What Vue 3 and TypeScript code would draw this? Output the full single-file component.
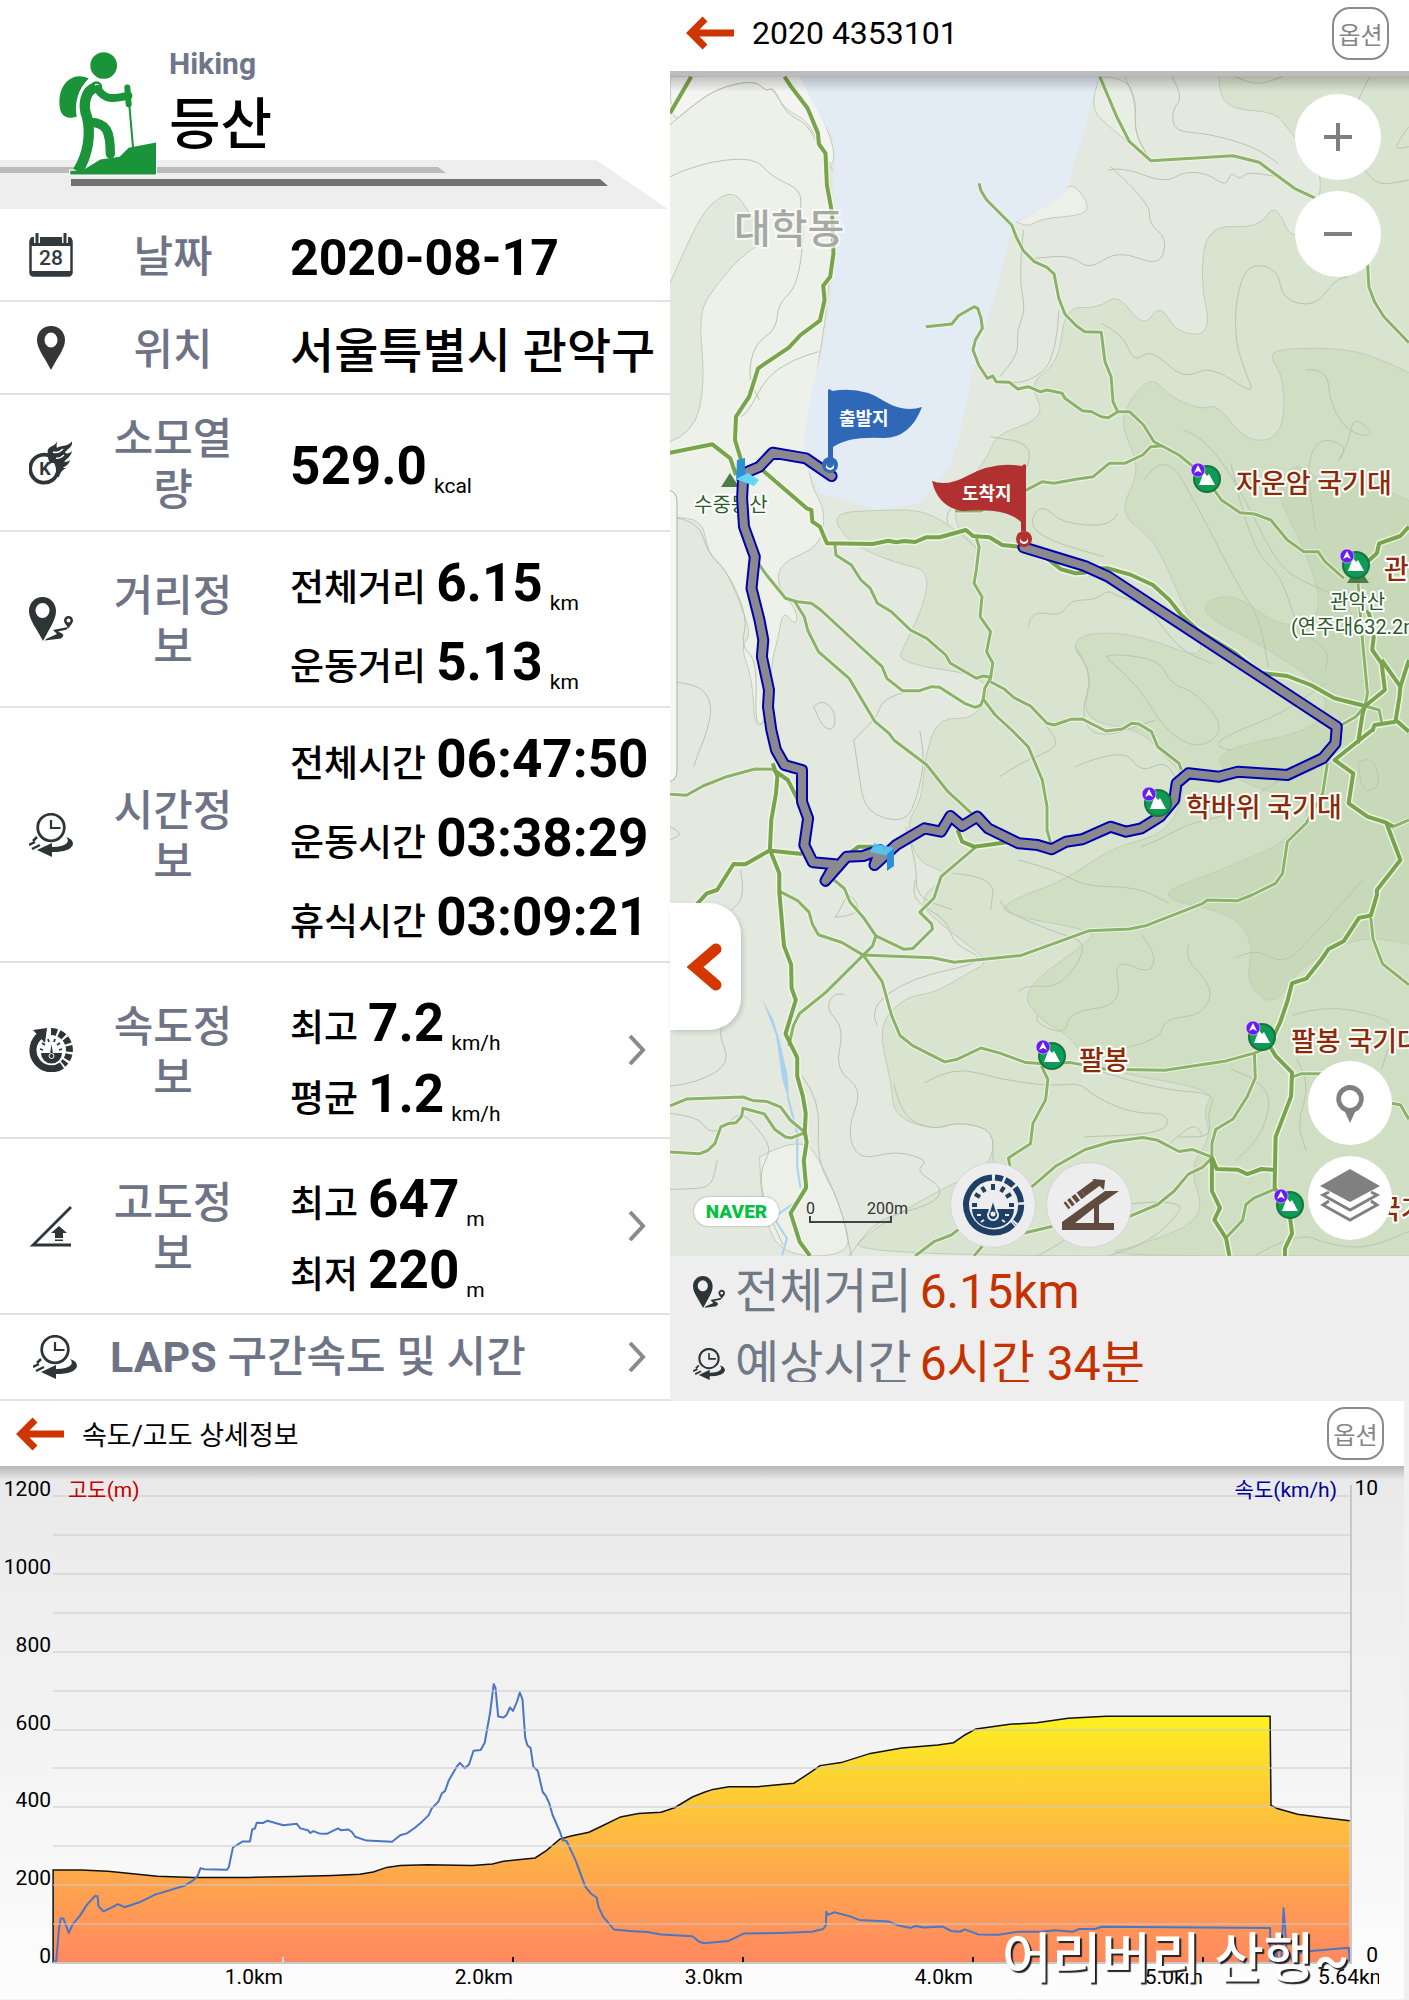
<script setup lang="ts">
interface Reading {
  name?: string
  value: string
  unit?: string
}
interface InfoRow {
  icon: string
  label: string
  readings: Reading[]
  kind: string
  more?: boolean
}
interface Peak {
  x: number
  y: number
  name: string
  tx: number
}

const rows: InfoRow[] = [
  { icon: 'calendar', label: '날짜', kind: 'date', readings: [{ value: '2020-08-17' }] },
  { icon: 'pin', label: '위치', kind: 'place', readings: [{ value: '서울특별시 관악구' }] },
  { icon: 'kcal', label: '소모열량', kind: 'single', readings: [{ value: '529.0', unit: 'kcal' }] },
  {
    icon: 'distance',
    label: '거리정보',
    kind: 'roomy',
    readings: [
      { name: '전체거리', value: '6.15', unit: 'km' },
      { name: '운동거리', value: '5.13', unit: 'km' },
    ],
  },
  {
    icon: 'time',
    label: '시간정보',
    kind: 'roomy',
    readings: [
      { name: '전체시간', value: '06:47:50' },
      { name: '운동시간', value: '03:38:29' },
      { name: '휴식시간', value: '03:09:21' },
    ],
  },
  {
    icon: 'speed',
    label: '속도정보',
    kind: 'tight',
    more: true,
    readings: [
      { name: '최고', value: '7.2', unit: 'km/h' },
      { name: '평균', value: '1.2', unit: 'km/h' },
    ],
  },
  {
    icon: 'slope',
    label: '고도정보',
    kind: 'tight',
    more: true,
    readings: [
      { name: '최고', value: '647', unit: 'm' },
      { name: '최저', value: '220', unit: 'm' },
    ],
  },
]

/* Survey sheets: left, top, horizontal and vertical units per drawn pixel. */
const sheets: Record<string, [number, number, number, number]> = {
  a: [0, 0, 2.122, 3],
  b: [0, 430, 2.122, 3],
  c: [0, 880, 2.122, 2.958],
  d: [0, 1400, 2.224, 2.613],
  e: [704, 1400, 2.224, 2.613],
}

type Point = [number, number]

function survey(trace: string): Point[] {
  let sheet = sheets.a
  const out: Point[] = []
  for (const token of trace.split(' ')) {
    if (sheets[token]) {
      sheet = sheets[token]
      continue
    }
    const [x, y] = token.split(',').map(Number)
    out.push([Math.round((sheet[0] + x / sheet[2]) * 10) / 10, Math.round((sheet[1] + y / sheet[3]) * 10) / 10])
  }
  return out
}

function line(trace: string): string {
  return 'M' + survey(trace).map((p) => p.join(' ')).join('L')
}

function smooth(trace: string): string {
  const p = survey(trace)
  let d = `M${p[0][0]} ${p[0][1]}`
  for (let i = 1; i < p.length - 1; i++) {
    d += `Q${p[i][0]} ${p[i][1]} ${(p[i][0] + p[i + 1][0]) / 2} ${(p[i][1] + p[i + 1][1]) / 2}`
  }
  const last = p[p.length - 1]
  return d + `L${last[0]} ${last[1]}`
}

const land: { fill: string; d: string }[] = [
  { fill: '#edf1e9', d: smooth('a 0,230 270,230 340,420 345,850 285,1330 b 300,170 330,240 320,350 230,400 230,480 270,540 268,590 240,540 230,620 215,700 210,850 180,905 175,750 150,650 170,620 160,560 120,420 80,370 70,270 0,260') },
  { fill: '#f4f5f2', d: smooth('a 0,230 0,375 40,325 100,265 180,240 205,275 215,260 245,330 290,360 320,440 345,510 350,430 280,230') },
  { fill: '#e1e9dc', d: smooth('a 0,1325 50,1300 75,1150 60,940 95,860 150,770 205,720 170,640 135,570 85,610 50,690 0,850') },
  { fill: '#d9e4d0', d: smooth('a 1165,230 1165,290 1200,330 1285,335 1315,395 1400,540 1325,745 1285,605 1250,685 1140,675 1125,840 1150,1005 1075,1000 1040,910 1005,985 950,880 910,925 838,920 825,1090 760,1150 800,1250 690,1305 680,1360 b 580,260 685,400 560,240 440,240 340,250 380,340 480,400 550,420 540,520 500,640 480,700 690,740 650,870 570,860 540,980 535,1110 500,1180 525,1300 600,1330 c 520,60 590,150 680,240 640,270 560,335 500,345 440,430 470,600 475,700 560,740 610,715 690,740 680,850 580,910 420,1040 380,1112 1568,1112 1600,1112 a 1600,200 1568,230') },
  { fill: '#d0dec4', d: smooth('a 1600,1140 1530,1090 1440,1045 1300,1045 1270,1065 1305,1140 1300,1310 1225,1330 1160,1210 1130,1230 1060,1190 1020,1125 965,1220 b 960,0 1000,120 950,250 1030,330 1080,500 1150,700 1000,615 885,605 850,650 900,730 870,870 1000,900 1050,980 1100,1050 1060,1210 940,1250 840,1350 c 720,60 700,100 900,150 890,180 740,330 790,420 840,450 900,560 1160,620 1130,680 1150,760 1100,850 1140,1000 1000,1080 900,1112 1600,1112') },
  { fill: '#c8d9b9', d: smooth('b 1600,230 1520,190 1450,100 1390,170 1330,90 1280,180 1350,360 1390,560 1300,600 1190,480 1110,540 1250,640 1400,780 1380,900 1150,960 1190,1050 1380,1130 1300,1240 1220,1290 1150,1330 1020,1400 c 1200,100 1240,200 1220,300 1280,380 1340,250 1470,160 1600,200') },
  { fill: '#ecf0e6', d: smooth('a 735,665 825,600 850,545 885,600 885,645 790,655 760,680 735,665') },
  { fill: '#e9eee4', d: smooth('a 910,230 965,230 990,300 985,400 1020,480 940,390 893,330 910,230') },
  { fill: '#ecf0e8', d: smooth('c 190,820 280,750 330,860 370,1000 385,1112 230,1112 195,960 190,820') },
]

const lake = line('a 275,230 300,300 345,415 350,470 342,700 345,850 330,1000 300,1180 283,1330 b 285,100 320,190 440,240 530,220 595,110 612,30 a 640,1130 690,880 725,690 735,665 825,600 845,560 910,230')

const contours: string[] = [
  'a 0,375 40,325 100,265 180,240 205,275 220,260 245,340 290,370 320,450 345,510',
  'a 0,530 60,490 180,470 215,530 280,570 275,640 285,700 270,860 230,910 225,990 180,1030 165,1130 190,1200',
  'a 150,1250 165,1240 205,1130 260,1080 315,1055',
  'a 965,230 990,300 985,400 1020,480',
  'a 1065,230 1090,290 1065,330 1070,395 1140,400 1240,440 1290,490',
  'a 1200,230 1240,260 1300,230',
  'a 1485,230 1450,320 1445,420 1490,560 1568,540',
  'a 1568,380 1530,450 1568,440',
  'a 935,500 1020,610 1015,670 1055,715 1040,800 950,750 890,810 850,765 775,775',
  'a 930,510 960,500 1050,550 1090,515 1140,520 1180,560 1190,515 1210,540 1225,515 1290,530',
  'a 750,690 740,830 755,930 735,990 740,1060 700,1130',
  'a 825,930 820,1080 760,1150 690,1145',
  'a 915,970 960,1000 985,1090 1020,1045 1090,1140 1145,1095 1240,1185 1225,1130 1200,1030 1200,900 1225,790 1290,805 1300,900 1370,920 1410,840 1440,830',
  'a 1350,1110 1395,1105 1400,1210 1440,1300 1500,1310 1450,1245 1440,1330 1410,1400 b 1440,50 1380,20 1350,100 1370,300',
  'b 0,260 60,270 80,370 120,420 165,560 150,650 185,690 180,905 215,850',
  'b 0,755 60,760 90,820 80,900 60,970 50,1010',
  'b 305,830 320,808 350,840 350,900 325,895 305,830',
  'b 390,930 410,900 440,860 450,810 510,780',
  'b 390,930 400,1030 415,1150 500,1180 525,1100 540,990 530,900',
  'b 590,280 580,250 640,180 720,150 760,120 765,40 680,20',
  'b 760,590 765,540 830,560 850,510 900,510 930,480 950,500 1010,520 1080,660 1150,700',
  'b 925,680 940,670 1040,690 1060,760 1120,790 1180,900 1120,960 1050,900 1000,780 925,680',
  'b 860,650 900,730 870,850 905,930 1030,870',
  'b 950,250 940,290 830,280 790,220 760,280 800,330 920,380',
  'b 1005,150 1050,60 1120,230 1210,480 1250,560 1270,710',
  'b 1190,100 1230,350 1300,440 1330,600 1400,660 1390,720',
  'b 1090,0 1130,20 1200,150 1280,380 1320,440 1420,500 1450,560',
  'b 1190,960 1150,950 1190,910 1300,850 1390,760',
  'b 700,1040 740,1000 830,950 800,890',
  'b 860,1010 960,950 1000,1030 1050,990 1080,1060',
  'b 600,1330 690,1340 680,1440',
  'b 740,1290 820,1320 880,1370 990,1370 1060,1420',
  'b 500,1190 525,1300 520,1400 600,1440',
  'b 150,1320 160,1400 130,1440',
  'b 0,1190 30,1210 0,1230',
  'b 1460,1000 1490,970 1510,1070 1470,1090 1460,1000',
  'b 1000,1250 1040,1230 1100,1180 1180,1160 1280,1060 1350,1010',
  'c 350,110 410,105 380,30 360,90 350,110',
  'c 370,340 350,330 330,380 370,440 350,560 410,620 375,740 400,830 480,800 550,830 520,860 580,910 560,960 440,1000 380,1112',
  'c 280,580 320,650 310,830 360,950 385,1112',
  'c 0,610 60,600 130,540 100,450 130,400',
  'c 0,690 60,700 80,745 110,740 150,680 195,750 215,800 190,860 200,960 240,1080',
  'c 0,915 60,915 90,900 100,830',
  'c 440,430 420,380 510,290 680,240 600,190 590,120 515,60 520,0',
  'c 475,600 490,700 560,740 610,715 690,740 680,850 750,900',
  'c 540,600 600,550 700,590 810,610 870,600 900,640 980,690 1060,690 1050,750 880,760',
  'c 780,400 770,420 840,460 845,390 960,370 940,230 1020,280 1030,220 1000,160',
  'c 740,330 750,310 830,320 890,190 830,160 720,100 700,60',
  'c 1100,190 1090,230 1155,320 1130,400 1050,410 1040,470 930,510',
  'c 1200,230 1240,200 1300,250 1350,190 1470,0',
  'c 900,560 1030,620 1160,630 1140,690 1150,760 1080,760',
  'c 1130,760 1120,710 1060,780',
  'c 1320,400 1390,370 1500,400 1540,430 1510,560',
  'c 1330,530 1360,600 1330,720 1350,800',
  'c 960,960 1100,940 1060,1020 1000,1080 930,1112',
  'c 1190,560 1280,600 1260,750 1200,830',
  'c 1240,1112 1330,1040 1400,1080 1480,1090 1568,1040',
  'c 780,1112 850,1060 840,1040',
].map(smooth)

const trails: string[] = [
  'a 656,550 660,572 672,600 725,675 735,712 750,752 773,785 800,802 815,822 825,895 838,942 862,977 880,995 915,997 923,1085 936,1130 940,1205 950,1235 975,1235 1005,1275 1027,1325 1080,1365 1110,1400',
  'a 543,980 598,972 612,947 645,920 653,925 660,955 663,985 648,1020 643,1050 655,1095 673,1135 685,1128 692,1145 720,1147 738,1167 760,1160 785,1175 800,1170 832,1180 838,1195 875,1232 895,1235 915,1250 930,1253 950,1235',
  'a 1045,1337 1020,1340 1003,1365 965,1390 932,1390 898,1430 865,1437 b 815,160 790,155 750,185 700,205 660,243 605,243',
  'a 912,230 948,350 975,425 1020,482 1195,467 1250,487 1325,565 1370,595',
  'a 1480,790 1483,860 1495,905 1515,950 1568,1028',
  'b 1155,180 1170,210 1210,248 1240,252 1275,270 1310,330 1345,365 1375,365 1390,395 1430,445',
  'b 1460,460 1470,640 1480,790 1475,828',
  'b 1475,828 1505,840 1510,875',
  'b 1475,828 1455,860 1425,885',
  'b 1395,1000 1385,1090 1350,1180 1310,1235 1300,1330 1285,1360 1235,1395 1205,1412 1140,1410 c 1130,70 1010,135 975,145 890,150 745,223 603,243 557,230 410,222',
  'b 350,342 352,375 385,405 405,450 425,475 440,520 470,545 510,600 545,625 585,675 595,700 650,745 665,738 680,742',
  'b 650,325 656,350 650,420 645,460 662,500 658,560 680,605 672,665 685,700 680,745 668,775 665,805 660,825 648,832 625,820 572,772 555,770 530,782 493,782 460,745 450,710 400,645 320,540 300,520 270,515 245,505 205,435 185,395',
  'b 265,515 285,560 292,600 315,665 380,745 435,875 465,910 475,930 545,1005 590,1085 640,1150',
  'b 680,755 710,778 730,803 765,828 800,880 815,885 850,868 875,867 925,903 960,897 980,880 995,882 1022,905 1035,950 1080,1000 1085,1020',
  'b 665,808 690,855 725,900 760,950 790,1050 800,1130 800,1200 808,1240',
  'b 650,1250 575,1340 560,1405 c 530,95 555,130 557,145 515,203 497,205 437,165',
  'c 235,35 270,60 295,95 302,130 315,162 365,185 410,222 430,195 437,165 410,110 382,65 370,25 348,0',
  'c 410,222 330,333 275,395 262,430 252,490',
  'c 410,222 450,300 470,400 488,460 515,490 583,538 610,530 660,497 700,512 755,540 785,543 850,540 925,560 1050,563 1180,535 1240,512 1270,495',
  'c 788,550 802,590 797,650 770,720 765,780 718,822 722,850',
  'c 1240,515 1242,585 1225,640 1195,707 1158,738 1150,780 1150,820',
  'c 1150,820 1108,797 1080,803 1035,770 1003,762 935,775 880,798 820,845 770,905 700,960',
  'c 1148,825 1130,850 1100,870 1070,920 1035,960 975,995 900,1010',
  'c 1283,915 1240,940 1222,960 1215,1007 1180,1058',
  'c 1320,583 1340,573 1385,573',
  'c 1520,658 1550,665 1568,708',
  'c 1487,112 1492,175 1512,248 1568,310',
  'c 520,1112 560,1070 597,1050 625,1020',
  'c 645,1112 665,1080',
  'c 750,1045 810,1025 850,1010',
  'b 0,1093 35,1096 70,1068 120,1040 180,1017 220,1018',
  'c 0,668 35,648 155,642 175,652 205,655 235,672 255,710 285,745',
  'c 0,805 62,810 80,800 95,780 108,730 125,720 140,718 152,700 155,675 200,692 222,737 245,760 258,763 285,748',
  'b 1535,1190 1568,1170',
].map(line)

const roads: string[] = [
  'a 0,340 45,230',
  'a 243,230 258,262 292,325 314,400 316,432 330,460 333,555 344,640 347,760 340,830 325,857 328,900 318,962 277,1005 252,1043 187,1105 168,1190 140,1250 138,1320 152,1385',
  'a 0,1358 90,1333 128,1375 140,1425',
  'b 180,100 200,125 290,235 300,240 302,275 318,290 333,340 430,342 463,332 480,337 497,333 520,336 543,322 572,322 628,300 643,318 678,322 705,345 740,350 800,385 830,418 860,430 880,428 910,415 930,415 975,433 1025,465 1060,510 1085,555 1120,600 1200,670 1250,728 1310,738 1360,765 1410,805 1475,828',
  'b 218,1000 228,1040 225,1090 215,1170 212,1260 232,1330 c 232,35 242,195 257,250 258,320 267,355 245,455 270,525 270,580 282,640 288,690 286,745 290,775 284,830 289,910 256,985 275,1070 297,1112',
  'b 220,1020 250,1050 275,1120',
  'b 210,1262 160,1303 135,1302 100,1380 78,1390 60,1418 c 55,78',
  'b 215,1262 280,1272',
  'b 380,1270 400,1250 440,1250',
  'b 1568,290 1550,318 1505,340 1500,370 1480,395',
  'b 1480,540 1495,600 1490,660 1510,700 1517,780 1475,828 1470,850 1460,940',
  'b 1490,900 1450,945 1410,990 1450,1030 1440,1120 1480,1160 1520,1178 1550,1290 1500,1380 c 1500,45 1487,105 1462,112 1430,180 1397,205 1380,240 1350,292 1320,305 1310,360 1295,420 1272,490 1285,520 1320,570 1318,640 1285,760 1283,910 1315,990 1320,1045 1305,1090 1305,1112',
  'b 1510,690 1550,770 1548,800 1540,870 1568,905',
  'b 1568,690 1550,770',
  'b 1540,875 1495,885 1490,905',
  'b 1520,1178 1535,1190',
  'b 610,1200 620,1235 645,1250 700,1240 725,1235',
  'c 1150,820 1160,855 1205,857 1225,870 1255,855 1280,857',
  'c 1150,820 1150,920 1167,970 1155,1005 1180,1060 1187,1112',
].map(line)

const streams: string[] = ['c 250,640 270,750 270,850 277,910', 'c 280,940 228,990 225,1010 248,1060 238,1110'].map(line)
const pond = line('c 195,350 218,410 230,460 250,580 252,650 238,590 225,460')

const route = line('b 343,138 288,85 218,68 190,110 165,125 155,150 153,205 157,290 180,380 173,475 190,570 198,630 195,680 210,780 208,830 215,900 225,960 243,1005 280,1020 280,1115 293,1165 285,1245 303,1297 350,1303 330,1352 375,1280 410,1278 445,1260 434,1305 480,1245 540,1195 575,1205 595,1158 620,1188 652,1160 675,1195 740,1240 780,1245 810,1258 840,1235 875,1228 935,1190 968,1205 1000,1195 1040,1160 1070,1110 1075,1060 1100,1030 1165,1040 1205,1025 1310,1035 1385,985 1412,940 1415,890 930,440 880,408 750,352')

const peaks: Peak[] = [
  { x: 537, y: 479, name: '자운암 국기대', tx: 566 },
  { x: 686, y: 565, name: '관', tx: 714 },
  { x: 488, y: 803, name: '학바위 국기대', tx: 516 },
  { x: 382, y: 1056, name: '팔봉', tx: 409 },
  { x: 592, y: 1037, name: '팔봉 국기대', tx: 621 },
  { x: 620, y: 1205, name: '국기대', tx: 706 },
]

const altitude = 'd 118,1231 180,1231 240,1234 290,1240 350,1247 430,1250 550,1250 650,1248 740,1245 800,1242 830,1236 860,1224 890,1219 950,1217 1050,1219 1095,1215 1120,1208 1190,1199 1215,1180 1245,1150 1270,1142 1310,1132 1340,1115 1380,1092 1420,1083 1470,1080 1500,1068 1540,1040 1568,1027 e 20,1020 55,1013 120,1013 200,1004 235,977 258,958 305,950 370,926 440,912 520,904 555,898 580,878 605,862 680,850 740,846 810,834 895,829 1259,829 1261,1062 1275,1070 1320,1085 1380,1094 1436,1102'
const altitudeLine = line('d 118,1474 ' + altitude)
const altitudeArea = line('d 118,1474 ' + altitude + ' e 1436,1474') + 'Z'
const speedLine = line('d 118,1470 125,1470 131,1385 135,1357 141,1358 153,1395 162,1372 178,1350 193,1322 212,1298 217,1300 219,1325 230,1339 250,1328 262,1320 277,1328 310,1315 345,1295 410,1272 432,1256 440,1245 446,1226 455,1229 505,1230 509,1222 518,1172 540,1156 556,1156 561,1125 567,1122 571,1107 585,1108 595,1102 630,1114 660,1110 668,1122 685,1127 690,1134 697,1129 710,1135 728,1136 752,1122 758,1127 775,1125 783,1132 790,1144 815,1154 872,1157 890,1140 905,1135 922,1121 938,1105 953,1088 960,1070 975,1052 983,1030 990,1024 998,997 1015,962 1023,951 1034,965 1043,955 1053,919 1069,917 1078,898 1090,820 1098,745 1102,755 1108,830 1120,832 1127,825 1134,806 1141,815 1150,790 1156,767 1162,785 1168,885 1173,905 1180,912 1186,960 1196,972 1207,1027 1214,1037 1222,1058 1229,1087 1245,1130 1252,1153 1260,1155 1280,1205 1302,1275 1315,1293 1327,1303 1331,1327 1341,1352 1365,1386 1400,1390 1440,1393 1470,1399 1540,1404 1555,1418 e 0,1422 55,1416 88,1397 170,1395 240,1392 265,1385 271,1375 272,1340 276,1348 290,1341 325,1352 345,1361 410,1365 430,1375 460,1382 470,1377 490,1381 530,1378 550,1390 570,1392 580,1386 610,1399 655,1400 700,1392 750,1392 780,1388 820,1392 835,1385 870,1385 885,1379 1259,1382 1260,1470 1272,1470 1272,1425 1276,1470 1284,1460 1289,1330 1296,1440 1310,1470 1320,1450 1345,1443 1434,1434 1436,1470')

const gridLines = Array.from({ length: 13 }, (_, i) => Math.round(1497 + (i * 467) / 12))
const heights = [1200, 1000, 800, 600, 400, 200, 0].map((v, i) => ({ v, y: Math.round(1497 + (i * 467) / 6) }))
const distances = [1, 2, 3, 4, 5].map((v) => ({ v: v.toFixed(1) + 'km', x: 53 + v * 230 }))
</script>

<template>
  <svg class="sprite" aria-hidden="true">
    <symbol id="calendar" viewBox="0 0 44 44">
      <rect x="1.500" y="5.500" width="41" height="37" rx="3" fill="#fff" stroke="#333a3f" stroke-width="2.500" />
      <path d="M1 13V7q0-3 3-3h36q3 0 3 3v6zM1 38h42v2q0 3-3 3H4q-3 0-3-3z" fill="#333a3f" />
      <path d="M8 1v9M36 1v9" stroke="#fff" stroke-width="6" />
      <path d="M8 0v10M36 0v10" stroke="#333a3f" stroke-width="3" />
      <text x="22" y="32" text-anchor="middle" font-size="21" font-weight="500" fill="#333a3f">28</text>
    </symbol>
    <symbol id="pin" viewBox="0 0 44 44">
      <path fill-rule="evenodd" d="M22 0C14 0 8 6 8 14c0 9 8 18 14 30 6-12 14-21 14-30C36 6 30 0 22 0zm0 6.500a6.500 7.500 0 1 1 0 15 6.500 7.500 0 1 1 0-15z" fill="#363636" />
    </symbol>
    <symbol id="kcal" viewBox="0 0 44 44">
      <path d="M20 14.500A14 14 0 1 0 29 30" fill="none" stroke="#2e3536" stroke-width="3.800" />
      <path d="M19 13C17 4 26 7 28 0c0 3-1 5 0 7 4-3 10-1 15-6.500C44 7 37 8 36 12c3 1 5 0 7-2-1 6-6 8-8 11 2 0 5-1 6-2-1 5-5 6-7 8h3c-4 2-6 5-7 9l-4-1c2-5 1-9-1-13-3 0-3 0-5 2 1-5-2-6-1-11z" fill="#2e3536" />
      <path d="M24 11c3 1 7 0 10-3M27 17c3 1 6-1 8-3" stroke="#fff" stroke-width="1.500" fill="none" />
      <text x="16" y="34" text-anchor="middle" font-size="18" font-weight="700" fill="#2e3536">K</text>
    </symbol>
    <symbol id="distance" viewBox="0 0 44 44">
      <path fill-rule="evenodd" d="M13.500 0C6 0 0 6 0 14c0 9 8 18 14 30 6-12 13-21 13-30C27 6 21 0 13.500 0zm0 6a7 7.500 0 1 1 0 15 7 7.500 0 1 1 0-15z" fill="#2e3536" />
      <path fill-rule="evenodd" d="M39.500 19c-2.500 0-4.500 2-4.500 4.500 0 3 3 5 4.500 8 1.500-3 4.500-5 4.500-8 0-2.500-2-4.500-4.500-4.500zm0 2.500a2 2 0 1 1 0 4 2 2 0 1 1 0-4z" fill="#2e3536" />
      <path d="M39 30l-15 3 4 4-11 5-1 1.500 16-2q4-3 1-5l-4-2 9-2z" fill="#2e3536" />
    </symbol>
    <symbol id="time" viewBox="0 0 44 44">
      <circle cx="22" cy="14.500" r="13.300" fill="none" stroke="#2e3536" stroke-width="2.800" />
      <path d="M22 7v8h9.500" fill="none" stroke="#2e3536" stroke-width="2.200" />
      <path d="M37 24q7 2 7 7-2 8-21 8v5L8 37l15-7v4q11 0 15-4 2-3-1-6z" fill="#2e3536" />
      <path d="M8 24l-4 4M6 29l-6 3M11 32l-8 4" stroke="#2e3536" stroke-width="2.500" />
    </symbol>
    <symbol id="speed" viewBox="0 0 44 44">
      <path d="M12 7A18.500 18.500 0 1 0 33 37.500" fill="none" stroke="#2e3536" stroke-width="7" />
      <path d="M4 2l14-2-2 15z" fill="#2e3536" />
      <path d="M22 3.500A18.500 18.500 0 0 1 34 36" fill="none" stroke="#2e3536" stroke-width="7" stroke-dasharray="6 2.200" />
      <path d="M12 25h21a10.500 10.500 0 0 1-21 0z" fill="#2e3536" />
      <path d="M11 21l3 1M13 15l3 2M19 11l1 3M26 11l-1 3M31 15l-3 2M33 21l-3 1" stroke="#2e3536" stroke-width="1.800" />
      <path d="M22.500 16l-1.500 10h3z" fill="#2e3536" />
      <circle cx="22.500" cy="28" r="2.500" fill="#2e3536" stroke="#fff" />
    </symbol>
    <symbol id="slope" viewBox="0 0 44 44">
      <path d="M42 3L4 41h38" fill="none" stroke="#2e3536" stroke-width="2.800" />
      <path d="M30 22l8 7h-4v5h-8v-5h-4zM26 35.500h8V37h-8z" fill="#2e3536" />
    </symbol>
    <symbol id="back" viewBox="0 0 48 34">
      <path d="M48 17H8M19 3L5 17l14 14" fill="none" stroke="#cf3500" stroke-width="7" />
    </symbol>
    <symbol id="gauge" viewBox="0 0 64 64">
      <path d="M31 4.500a27.500 27.500 0 1 0 21 47" fill="none" stroke="#1f4066" stroke-width="6" />
      <path d="M34 4.500a27.500 27.500 0 0 1 19 46" fill="none" stroke="#1f4066" stroke-width="6" stroke-dasharray="8 2.500 10 2.500 16 2.500 18 2" />
      <path d="M11 36h42a21 19 0 0 1-42 0z" fill="#1f4066" />
      <path d="M11 32h5M14 21l5 3M21 14l3 5M32 11v6M43 14l-3 5M50 21l-5 3M53 32h-5" stroke="#1f4066" stroke-width="4" />
      <path d="M32 26l-4 13a5 5 0 1 0 8 0z" fill="#1f4066" stroke="#ededed" stroke-width="2" />
      <circle cx="32" cy="41" r="2.500" fill="#ededed" />
      <path d="M16 42h4M44 42h4M20 49l3-2M44 49l-3-2" stroke="#ededed" stroke-width="2" />
    </symbol>
    <symbol id="incline" viewBox="0 0 64 64">
      <path fill-rule="evenodd" d="M5 57v-8L48 18h14L42 32v18h15v7zM18 50h19V35z" fill="#5f4b3f" />
      <path d="M9 33l17-13" stroke="#5f4b3f" stroke-width="8" stroke-dasharray="2.500 2 3.500 2 4.500 2 5" />
      <path d="M26 20l15-11" stroke="#5f4b3f" stroke-width="8" />
      <path d="M35 6l13 1-1 10z" fill="#5f4b3f" />
    </symbol>
  </svg>

  <main class="page">
    <div class="upper">
      <section class="summary">
        <header class="sport">
          <svg class="ribbon" viewBox="0 0 670 49" preserveAspectRatio="none" aria-hidden="true">
            <path d="M0 0h596l72 49H0z" fill="#eee" />
            <path d="M0 7h438l8 6H0z" fill="#bbb" />
            <path d="M71 19h529l8 7H71z" fill="#717171" />
          </svg>
          <svg class="hiker" viewBox="170 60 300 380" aria-hidden="true">
            <path d="M206 437V418h14l80-34 55-8 28-26 87-18v105z" fill="#fff" />
            <g fill="#1b9338">
              <circle cx="310" cy="106" r="40" />
              <path d="M265 145C225 125 185 150 178 200c-3 35 2 65 37 63l14-3c-8-45 6-85 36-115z" />
              <path d="M210 433v-11h35l55-34 58-8 27-27 82-16v96z" />
            </g>
            <g fill="none" stroke="#1b9338" stroke-linecap="round">
              <path d="M286 172c-32 8-40 55-26 88 12 50 5 110-28 164" stroke-width="31" stroke-linecap="butt" />
              <circle cx="288" cy="171" r="4" stroke-width="28" />
              <path d="M292 176c20 34 48 32 92 20" stroke-width="24" />
              <path d="M268 276c50 2 62 25 62 95" stroke-width="28" />
              <path d="M381 172l4 50" stroke-width="18" />
              <path d="M387 225l11 126" stroke-width="6" />
            </g>
          </svg>
          <div class="sport-name">
            <p>Hiking</p>
            <h1>등산</h1>
          </div>
        </header>

        <dl class="rows">
          <div v-for="row in rows" :key="row.label" class="row" :class="row.kind">
            <svg class="icon" aria-hidden="true"><use :href="'#' + row.icon" /></svg>
            <dt>{{ row.label }}</dt>
            <dd>
              <p v-for="r in row.readings" :key="r.value">
                <span v-if="r.name" class="name">{{ r.name }}</span><b>{{ r.value }}</b><span v-if="r.unit" class="unit">{{ r.unit }}</span>
              </p>
            </dd>
            <button v-if="row.more" class="more" type="button" :aria-label="row.label">
              <svg viewBox="0 0 18 30"><path d="M2 1l13 14L2 29" /></svg>
            </button>
          </div>
        </dl>
        <button class="laps" type="button">
          <svg class="icon" aria-hidden="true"><use href="#time" /></svg>
          <span><b>LAPS</b> 구간속도 및 시간</span>
          <svg class="chev" viewBox="0 0 18 30"><path d="M2 1l13 14L2 29" /></svg>
        </button>
      </section>

      <section class="track">
        <header class="bar">
          <button class="back" type="button" aria-label="뒤로"><svg><use href="#back" /></svg></button>
          <h2 class="wide">2020 4353101</h2>
          <button class="option" type="button">옵션</button>
        </header>

        <div class="map">
          <svg class="canvas" viewBox="0 76 739 1180">
            <defs>
              <linearGradient id="shade" x2="0" y2="1">
                <stop offset="0" stop-color="#000" stop-opacity=".22" />
                <stop offset="1" stop-color="#000" stop-opacity="0" />
              </linearGradient>
            </defs>
            <rect y="76" width="739" height="1180" fill="#e3e9de" />
            <path v-for="(l, i) in land" :key="i" :d="l.d" :fill="l.fill" stroke="#c3ccbb" />
            <path :d="lake" fill="#e3ebf5" />
            <path v-for="(c, i) in contours" :key="i" :d="c" class="contour" />
            <path :d="pond" fill="#a9d2f1" />
            <path v-for="(s, i) in streams" :key="i" :d="s" class="stream" />
            <path v-for="(t, i) in trails" :key="i" :d="t" class="halo" stroke-width="5" />
            <path v-for="(t, i) in roads" :key="i" :d="t" class="halo" stroke-width="7" />
            <path v-for="(t, i) in trails" :key="i" :d="t" class="trail" />
            <path v-for="(t, i) in roads" :key="i" :d="t" class="road" />

            <text class="district" x="64" y="243">대학동</text>
            <path d="M60 473l-9 14h18zM688 566l-11 17h22z" fill="#4d7d45" />
            <g class="spot">
              <text x="24" y="512">수중동산</text>
              <text x="660" y="609">관악산</text>
              <text x="621" y="634">(연주대632.2m)</text>
            </g>

            <path :d="route" class="route-edge" />
            <path :d="route" class="route" />

            <path d="M67 460l8-2v19l-9 4z" fill="#2e8fd6" />
            <path d="M66 479l12-6 11 7-5 6z" fill="#64d6f7" />
            <path d="M204 843l20 5-4 8-20-4z" fill="#58c8f2" opacity=".9" />
            <path d="M217 854l7-6v18l-7 5z" fill="#2e8fd6" />

            <g v-for="p in peaks" :key="p.tx">
              <circle :cx="p.x" :cy="p.y" r="13" fill="#0d9b57" stroke="#16743f" stroke-width="2" />
              <path :transform="`translate(${p.x} ${p.y})`" d="M-8 6l5-13 3 4 2-2 6 11z" fill="#fff" />
              <circle :cx="p.x - 9" :cy="p.y - 9" r="7" fill="#6a1cf0" stroke="#fff" stroke-opacity=".5" />
              <path :transform="`translate(${p.x - 9} ${p.y - 9})`" d="M0-5l4 8-4-2-4 2z" fill="#fff" />
              <text class="peak" :x="p.tx" :y="p.y + 14">{{ p.name }}</text>
            </g>

            <g fill="#2f68b7">
              <path d="M158 390q2-2 4 1 30-5 52 10 20 12 38 6-12 31-38 31-36-2-51 9v12h-5z" />
              <circle cx="160" cy="465" r="8" />
              <path d="M156 463a4 5 0 0 0 8 0v5q-4 4-8 0z" fill="#fff" />
              <text class="flag" x="169" y="425">출발지</text>
            </g>
            <g fill="#b0312f">
              <path d="M356 465q-2-2-4 1-28-5-55 10-20 11-35 5 6 26 30 30 44-4 59 11v9h5z" />
              <circle cx="354" cy="539" r="8" />
              <path d="M350 537a4 5 0 0 0 8 0v5q-4 4-8 0z" fill="#fff" />
              <text class="flag" x="292" y="500">도착지</text>
            </g>

            <path d="M-4 490q11 0 11 12v268q0 12-11 12z" fill="#f5f7f3" stroke="#aab3a4" />
            <rect y="76" width="739" height="16" fill="url(#shade)" />

            <g class="ruler">
              <text x="136" y="1214">0</text>
              <text x="197" y="1214">200m</text>
              <path d="M140 1216v6h81v-6" fill="none" stroke="#444" stroke-width="2" />
            </g>
          </svg>

          <div class="zoom">
            <button type="button" aria-label="확대"><svg viewBox="0 0 30 30"><path d="M15 1v28M1 15h28" /></svg></button>
            <button type="button" aria-label="축소"><svg viewBox="0 0 30 30"><path d="M1 15h28" /></svg></button>
          </div>
          <button class="drawer" type="button" aria-label="열기">
            <svg viewBox="0 0 40 48"><path d="M32 6L11 24l21 18" /></svg>
          </button>
          <span class="naver">NAVER</span>
          <div class="modes">
            <button type="button" aria-label="속도"><svg><use href="#gauge" /></svg></button>
            <button type="button" aria-label="고도"><svg><use href="#incline" /></svg></button>
          </div>
          <div class="layers">
            <button type="button" aria-label="내 위치">
              <svg viewBox="0 0 60 60"><path fill-rule="evenodd" d="M30 12a14 14 0 0 1 5 27l-5 11-5-11a14 14 0 0 1 5-27zm0 5a9 9 0 1 0 0 18 9 9 0 1 0 0-18z" /></svg>
            </button>
            <button type="button" aria-label="지도 종류">
              <svg viewBox="0 0 60 60">
                <path fill="none" stroke="#808080" stroke-width="3" d="M9 33L3 37l27 15 27-15-6-4M9 24l-6 3 27 15 27-15-6-3" />
                <path d="M30 1l30 17-30 16L0 18z" />
              </svg>
            </button>
          </div>
        </div>

        <footer class="totals">
          <div class="clip">
            <p><svg><use href="#distance" /></svg><span>전체거리</span><b>6.15km</b></p>
            <p><svg><use href="#time" /></svg><span>예상시간</span><b>6시간 34분</b></p>
          </div>
        </footer>
      </section>
    </div>

    <section class="profile">
      <header class="bar low">
        <button class="back" type="button" aria-label="뒤로"><svg><use href="#back" /></svg></button>
        <h2>속도/고도 상세정보</h2>
        <button class="option" type="button">옵션</button>
      </header>
      <svg class="chart" viewBox="0 1467 1404 533">
        <defs>
          <linearGradient id="paper" x2="0" y2="1">
            <stop offset="0" stop-color="#e9e9e9" />
            <stop offset="1" stop-color="#fdfdfd" />
          </linearGradient>
          <linearGradient id="heat" x2="0" y2="1">
            <stop offset="0" stop-color="#fdf120" />
            <stop offset=".37" stop-color="#fdc63a" />
            <stop offset=".7" stop-color="#ffa250" />
            <stop offset="1" stop-color="#ff8860" />
          </linearGradient>
        </defs>
        <rect y="1467" width="1404" height="533" fill="url(#paper)" />
        <rect y="1467" width="1404" height="14" fill="url(#shade)" />
        <path :d="altitudeArea" fill="url(#heat)" />
        <path :d="altitudeLine" fill="none" stroke="#111" stroke-width="1.500" />
        <path v-for="x in distances" :key="x.x" :d="`M${x.x} 1958v6`" :stroke="x.x < 300 ? '#ddd' : '#111'" stroke-width="2" />
        <path :d="speedLine" fill="none" stroke="#4b76c4" stroke-width="2" stroke-linejoin="round" />
        <path v-for="y in gridLines" :key="y" :d="`M53 ${y}H1351`" stroke="#ccc" stroke-opacity=".7" stroke-width="1.500" />
        <path d="M53 1964H1351V1486" fill="none" stroke="#c8c8c8" stroke-width="2" />
        <text v-for="h in heights" :key="h.v" x="51" :y="h.y" text-anchor="end">{{ h.v }}</text>
        <text v-for="x in distances" :key="x.v" :x="x.x" y="1985" text-anchor="end">{{ x.v }}</text>
        <text x="68" y="1498" fill="#c40000">고도(m)</text>
        <text x="1337" y="1498" text-anchor="end" fill="#000096">속도(km/h)</text>
        <text x="1378" y="1496" text-anchor="end">10</text>
        <text x="1378" y="1963" text-anchor="end">0</text>
        <svg x="1310" y="1960" width="69" height="34"><text x="8" y="25">5.64km</text></svg>
        <text class="mark" x="1002" y="1979">어리버리 산행~</text>
      </svg>
    </section>
  </main>
</template>

<style>
body {
  margin: 0;
  background: #f0f0f0;
}
</style>

<style scoped>
.sprite {
  position: absolute;
  width: 0;
  height: 0;
}
.page,
.sprite {
  font-family: Roboto, "Noto Sans CJK KR", sans-serif;
}
.page {
  color: #000;
}
p,
h1,
h2,
dl,
dd {
  margin: 0;
}
button {
  font: inherit;
  padding: 0;
  border: 0;
  background: none;
}
.upper {
  display: grid;
  grid-template-columns: minmax(0, 670fr) minmax(0, 739fr);
}
.summary {
  background: #fff;
}
.sport {
  position: relative;
  display: flex;
  gap: 12px;
  padding: 50px 0 32px 57px;
}
.ribbon {
  position: absolute;
  left: 0;
  bottom: 0;
  width: 100%;
  height: 49px;
}
.hiker {
  position: relative;
  width: 100px;
  height: 127px;
}
.sport-name {
  position: relative;
}
.sport-name p {
  font-size: 30px;
  line-height: 28px;
  font-weight: 700;
  color: #70768a;
}
.sport-name h1 {
  font-size: 56px;
  line-height: 94px;
  font-weight: 500;
}
.row {
  display: grid;
  grid-template-columns: 102px 142px minmax(0, 1fr) auto;
  align-items: center;
  box-sizing: border-box;
  min-height: 93px;
  border-bottom: 2px solid #e2e2e2;
}
.icon {
  width: 44px;
  height: 44px;
  margin-left: 29px;
}
dt,
.laps {
  font-size: 43px;
  line-height: 51px;
  font-weight: 500;
  color: #6e7486;
}
dt {
  padding-top: 5px;
  text-align: center;
}
dd {
  padding: 7px 0 0 46px;
  white-space: nowrap;
}
dd p {
  display: flex;
  align-items: baseline;
  height: 83px;
  line-height: 83px;
}
dd b {
  font-size: 53px;
  font-weight: 700;
}
.date b {
  font-size: 50px;
}
.place b {
  font-size: 48px;
  font-weight: 500;
}
.single p {
  height: 128px;
  line-height: 128px;
}
.roomy dd {
  padding-top: 12px;
  padding-bottom: 4px;
}
.roomy p {
  height: 79px;
  line-height: 79px;
}
.tight dd {
  padding-top: 25px;
  padding-bottom: 7px;
}
.tight p {
  height: 71px;
  line-height: 71px;
}
.name {
  font-size: 37px;
  font-weight: 500;
  margin-right: 10px;
}
.unit {
  position: relative;
  top: 9px;
  font-size: 21px;
  line-height: 24px;
  margin-left: 7px;
}
.more,
.chev {
  width: 18px;
  height: 30px;
  margin-right: 24px;
}
.more svg {
  display: block;
}
.more path,
.chev path {
  fill: none;
  stroke: #8a8a8a;
  stroke-width: 4;
}
.laps {
  display: flex;
  align-items: center;
  width: 100%;
  height: 86px;
  border-bottom: 2px solid #e2e2e2;
  text-align: left;
}
.laps .icon {
  margin-left: 33px;
}
.laps span {
  flex: 1;
  padding-left: 33px;
}

.bar {
  display: flex;
  align-items: center;
  height: 66px;
  padding: 0 20px 5px 16px;
  background: #fff;
  border-bottom: 5px solid #bcbcbc;
}
.bar .back,
.bar .back svg {
  display: block;
  width: 48px;
  height: 34px;
}
.bar h2 {
  flex: 1;
  padding-left: 18px;
  font-size: 27px;
  font-weight: 400;
}
.bar .wide {
  font-size: 32px;
}
.option {
  width: 57px;
  height: 53px;
  border: 2px solid #8a8a8a;
  border-radius: 18px;
  font-size: 24px;
  color: #858585;
}
.bar.low {
  height: 65px;
  padding-bottom: 0;
  border: 0;
}

.map {
  position: relative;
}
.canvas,
.chart {
  display: block;
  width: 100%;
  height: auto;
}
.contour {
  fill: none;
  stroke: #b9c5b0;
}
.stream {
  fill: none;
  stroke: #a9d2f1;
  stroke-width: 2;
}
.halo {
  fill: none;
  stroke: #f4f9ea;
  stroke-opacity: 0.8;
  stroke-linejoin: round;
}
.trail {
  fill: none;
  stroke: #8bb269;
  stroke-width: 3;
  stroke-linejoin: round;
}
.road {
  fill: none;
  stroke: #79a44e;
  stroke-width: 4;
  stroke-linejoin: round;
}
.route-edge,
.route {
  fill: none;
  stroke: #0000b0;
  stroke-width: 12;
  stroke-linejoin: round;
  stroke-linecap: round;
}
.route {
  stroke: #89898f;
  stroke-width: 8;
}
.district,
.spot,
.peak {
  paint-order: stroke;
  stroke: #fff;
  stroke-width: 4;
  stroke-linejoin: round;
}
.district {
  font-size: 40px;
  font-weight: 500;
  fill: #a6aaa3;
  stroke-opacity: 0.7;
}
.spot {
  font-size: 20px;
  fill: #2a5a2a;
}
.peak {
  font-size: 27px;
  font-weight: 500;
  fill: #8c2a06;
}
.flag {
  font-size: 18px;
  font-weight: 700;
  fill: #fff;
}
.ruler {
  font-size: 16px;
  fill: #333;
}
.zoom,
.layers {
  position: absolute;
  display: grid;
  gap: 11px;
}
.zoom {
  top: 18px;
  right: 28px;
}
.layers {
  right: 17px;
  bottom: 16px;
}
.zoom button,
.layers button,
.modes button {
  display: grid;
  place-items: center;
  width: 84px;
  height: 84px;
  border-radius: 50%;
  background: #fff;
}
.zoom button {
  width: 86px;
  height: 86px;
}
.zoom svg {
  width: 30px;
  height: 30px;
}
.zoom path {
  stroke: #7f7f7f;
  stroke-width: 4;
}
.layers svg {
  width: 60px;
  height: 60px;
  fill: #808080;
}
.modes {
  position: absolute;
  left: 280px;
  bottom: 8px;
  display: flex;
  gap: 10px;
}
.modes button {
  background: #ededed;
  border: 1px solid #d5d5d5;
  box-sizing: content-box;
}
.modes svg {
  width: 64px;
  height: 64px;
}
.drawer {
  position: absolute;
  left: 0;
  top: 827px;
  width: 71px;
  height: 127px;
  border-radius: 0 32px 32px 0;
  background: #fff;
  box-shadow: 2px 2px 5px rgba(0, 0, 0, 0.15);
}
.drawer svg {
  display: block;
  width: 40px;
  height: 48px;
  margin-left: 14px;
}
.drawer path {
  fill: none;
  stroke: #d43800;
  stroke-width: 11;
  stroke-linecap: round;
}
.naver {
  position: absolute;
  left: 24px;
  bottom: 30px;
  width: 85px;
  line-height: 29px;
  border-radius: 15px;
  background: #fff;
  box-shadow: 0 0 2px rgba(0, 0, 0, 0.4);
  text-align: center;
  font-size: 19px;
  font-weight: 900;
  color: #06c044;
}
.totals {
  height: 145px;
  background: #eee;
}
.clip {
  height: 126px;
  overflow: hidden;
}
.totals p {
  display: flex;
  align-items: center;
  padding-left: 23px;
  font-size: 48px;
  line-height: 72px;
}
.totals svg {
  width: 32px;
  height: 32px;
  margin-right: 10px;
}
.totals span {
  color: #707986;
}
.totals b {
  margin-left: 8px;
  font-weight: 400;
  color: #c43200;
}

.profile {
  margin-right: 5px;
}
.chart text {
  font-size: 21px;
}
.chart .mark {
  font-size: 54px;
  font-weight: 500;
  fill: #fff;
  text-shadow: 2px 2px 1px #222;
}
</style>
